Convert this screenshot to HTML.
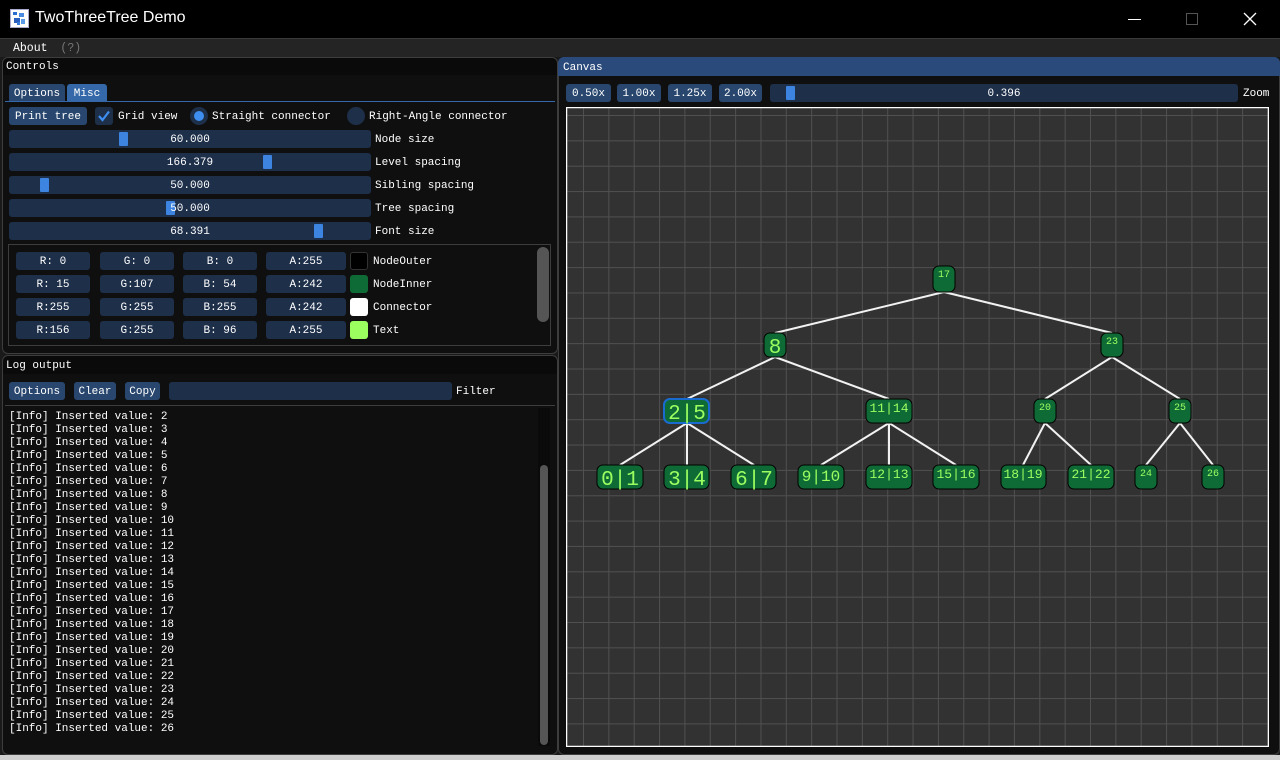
<!DOCTYPE html>
<html><head><meta charset="utf-8">
<style>
*{margin:0;padding:0;box-sizing:border-box}
body{width:1280px;height:760px;background:#1a1a1a;position:relative;overflow:hidden;font-family:"Liberation Mono","DejaVu Sans Mono",monospace;font-size:11px;color:#fff}
.a{position:absolute}
.btn{position:absolute;background:#29476e;border-radius:3px;height:18px;line-height:20px;text-align:center;color:#fff;white-space:nowrap}
.fr{position:absolute;background:#1e2f4a;border-radius:3px;height:18px;line-height:20px;text-align:center;white-space:nowrap}
.grab{position:absolute;top:2px;width:9px;height:14px;background:#3d84e0;border-radius:1px}
.lbl{position:absolute;line-height:20px;white-space:nowrap}
.win{position:absolute;background:#0f0f0f;border:1px solid #3d3d3d;border-radius:6px}
.log div{height:13px;line-height:13px;white-space:pre}
</style></head><body>
<div class="a" style="left:0;top:0;width:1280px;height:38px;background:#000"></div>
<div class="a" style="left:10px;top:9px;width:19px;height:19px;background:#fff;border:1px solid #aac"><svg width="17" height="17"><rect x="2" y="2" width="4" height="3" fill="#2a6fd0"/><rect x="8" y="3" width="5" height="4" fill="#4a8ae0"/><rect x="3" y="8" width="6" height="5" fill="#2a5fc0"/><rect x="10" y="9" width="4" height="5" fill="#5a9ae8"/><rect x="6" y="12" width="3" height="3" fill="#3a7ad8"/></svg></div>
<div class="a" style="left:35px;top:9px;font-family:'Liberation Sans',sans-serif;font-size:16px;color:#fff">TwoThreeTree Demo</div>
<div class="a" style="left:1128px;top:19px;width:13px;height:1px;background:#fff"></div>
<div class="a" style="left:1186px;top:13px;width:12px;height:12px;border:1px solid #555"></div>
<svg class="a" style="left:1243px;top:12px" width="14" height="14"><path d="M1 1L13 13M13 1L1 13" stroke="#fff" stroke-width="1.3"/></svg>
<div class="a" style="left:0;top:38px;width:1280px;height:19px;background:#242424;border-top:1px solid #3a3a3a"></div>
<div class="a" style="left:13px;top:41px;line-height:16px;font-size:11.5px">About <span style="color:#777;margin-left:6px">(?)</span></div>
<div class="a" style="left:0;top:755px;width:1280px;height:5px;background:#cfcfcf"></div>

<div class="win" style="left:2px;top:57px;width:556px;height:297px"></div>
<div class="a" style="left:3px;top:58px;width:554px;height:17px;background:#0a0a0a;border-radius:6px 6px 0 0"></div>
<div class="lbl" style="left:6px;top:57px">Controls</div>
<div class="btn" style="left:9px;top:84px;width:56px;height:17px;border-radius:3px 3px 0 0">Options</div>
<div class="btn" style="left:67px;top:84px;width:40px;height:17px;border-radius:3px 3px 0 0;background:#3468a8">Misc</div>
<div class="a" style="left:5px;top:101px;width:550px;height:1px;background:#3468a8"></div>
<div class="btn" style="left:9px;top:107px;width:78px">Print tree</div>
<div class="fr" style="left:95px;top:107px;width:18px"><svg width="18" height="18" style="position:absolute;left:0;top:0"><path d="M4 9L7.5 13L14 4.5" stroke="#3d8ef0" stroke-width="2.2" fill="none"/></svg></div>
<div class="lbl" style="left:118px;top:107px">Grid view</div>
<div class="a" style="left:190px;top:107px;width:18px;height:18px;border-radius:50%;background:#1e2f4a"><div class="a" style="left:4px;top:4px;width:10px;height:10px;border-radius:50%;background:#3d8ef0"></div></div>
<div class="lbl" style="left:212px;top:107px">Straight connector</div>
<div class="a" style="left:347px;top:107px;width:18px;height:18px;border-radius:50%;background:#1e2f4a"></div>
<div class="lbl" style="left:369px;top:107px">Right-Angle connector</div>

<div class="fr" style="left:9px;top:130px;width:362px">60.000<div class="grab" style="left:110px"></div></div><div class="lbl" style="left:375px;top:130px">Node size</div>
<div class="fr" style="left:9px;top:153px;width:362px">166.379<div class="grab" style="left:254px"></div></div><div class="lbl" style="left:375px;top:153px">Level spacing</div>
<div class="fr" style="left:9px;top:176px;width:362px">50.000<div class="grab" style="left:31px"></div></div><div class="lbl" style="left:375px;top:176px">Sibling spacing</div>
<div class="fr" style="left:9px;top:199px;width:362px"><div class="grab" style="left:157px"></div><span style="position:relative">50.000</span></div><div class="lbl" style="left:375px;top:199px">Tree spacing</div>
<div class="fr" style="left:9px;top:222px;width:362px">68.391<div class="grab" style="left:305px"></div></div><div class="lbl" style="left:375px;top:222px">Font size</div>

<div class="a" style="left:8px;top:244px;width:543px;height:102px;border:1px solid #3d3d3d"></div>
<div class="a" style="left:537px;top:247px;width:12px;height:75px;background:#555;border-radius:6px"></div>
<div class="fr" style="left:16px;top:252px;width:74px">R:  0</div><div class="fr" style="left:100px;top:252px;width:74px">G:  0</div><div class="fr" style="left:183px;top:252px;width:74px">B:  0</div><div class="fr" style="left:266px;top:252px;width:80px">A:255</div>
<div class="a" style="left:350px;top:252px;width:18px;height:18px;background:#000;border:1px solid #333;border-radius:3px"></div><div class="lbl" style="left:373px;top:252px">NodeOuter</div>
<div class="fr" style="left:16px;top:275px;width:74px">R: 15</div><div class="fr" style="left:100px;top:275px;width:74px">G:107</div><div class="fr" style="left:183px;top:275px;width:74px">B: 54</div><div class="fr" style="left:266px;top:275px;width:80px">A:242</div>
<div class="a" style="left:350px;top:275px;width:18px;height:18px;background:#0f6b36;border-radius:3px"></div><div class="lbl" style="left:373px;top:275px">NodeInner</div>
<div class="fr" style="left:16px;top:298px;width:74px">R:255</div><div class="fr" style="left:100px;top:298px;width:74px">G:255</div><div class="fr" style="left:183px;top:298px;width:74px">B:255</div><div class="fr" style="left:266px;top:298px;width:80px">A:242</div>
<div class="a" style="left:350px;top:298px;width:18px;height:18px;background:#fff;border-radius:3px"></div><div class="lbl" style="left:373px;top:298px">Connector</div>
<div class="fr" style="left:16px;top:321px;width:74px">R:156</div><div class="fr" style="left:100px;top:321px;width:74px">G:255</div><div class="fr" style="left:183px;top:321px;width:74px">B: 96</div><div class="fr" style="left:266px;top:321px;width:80px">A:255</div>
<div class="a" style="left:350px;top:321px;width:18px;height:18px;background:#9cff60;border-radius:3px"></div><div class="lbl" style="left:373px;top:321px">Text</div>

<div class="win" style="left:2px;top:355px;width:556px;height:400px"></div>
<div class="a" style="left:3px;top:356px;width:554px;height:18px;background:#0a0a0a;border-radius:6px 6px 0 0"></div>
<div class="lbl" style="left:6px;top:356px">Log output</div>
<div class="btn" style="left:9px;top:382px;width:56px">Options</div>
<div class="btn" style="left:74px;top:382px;width:42px">Clear</div>
<div class="btn" style="left:125px;top:382px;width:35px">Copy</div>
<div class="fr" style="left:169px;top:382px;width:283px"></div>
<div class="lbl" style="left:456px;top:382px">Filter</div>
<div class="a" style="left:5px;top:405px;width:550px;height:1px;background:#3d3d3d"></div>
<div class="a" style="left:538px;top:408px;width:12px;height:338px;background:#0a0a0a"></div>
<div class="a" style="left:540px;top:465px;width:8px;height:280px;background:#555;border-radius:4px"></div>
<div class="a log" style="left:9px;top:411px">
<div>[Info] Inserted value: 2</div><div>[Info] Inserted value: 3</div><div>[Info] Inserted value: 4</div><div>[Info] Inserted value: 5</div><div>[Info] Inserted value: 6</div><div>[Info] Inserted value: 7</div><div>[Info] Inserted value: 8</div><div>[Info] Inserted value: 9</div><div>[Info] Inserted value: 10</div><div>[Info] Inserted value: 11</div><div>[Info] Inserted value: 12</div><div>[Info] Inserted value: 13</div><div>[Info] Inserted value: 14</div><div>[Info] Inserted value: 15</div><div>[Info] Inserted value: 16</div><div>[Info] Inserted value: 17</div><div>[Info] Inserted value: 18</div><div>[Info] Inserted value: 19</div><div>[Info] Inserted value: 20</div><div>[Info] Inserted value: 21</div><div>[Info] Inserted value: 22</div><div>[Info] Inserted value: 23</div><div>[Info] Inserted value: 24</div><div>[Info] Inserted value: 25</div><div>[Info] Inserted value: 26</div>
</div>

<div class="win" style="left:558px;top:57px;width:722px;height:698px"></div>
<div class="a" style="left:558px;top:57px;width:722px;height:19px;background:#294a7a;border-radius:6px 6px 0 0"></div>
<div class="lbl" style="left:563px;top:58px">Canvas</div>
<div class="btn" style="left:566px;top:84px;width:45px">0.50x</div>
<div class="btn" style="left:617px;top:84px;width:44px">1.00x</div>
<div class="btn" style="left:668px;top:84px;width:44px">1.25x</div>
<div class="btn" style="left:719px;top:84px;width:43px">2.00x</div>
<div class="fr" style="left:770px;top:84px;width:468px">0.396<div class="grab" style="left:16px"></div></div>
<div class="lbl" style="left:1243px;top:84px">Zoom</div>
<svg class="a" style="left:566px;top:107px" width="703" height="640">
<defs><pattern id="g" x="17" y="8" width="25.35" height="25.35" patternUnits="userSpaceOnUse"><rect width="25.35" height="25.35" fill="#323232"/><path d="M0 0.5H25.35M0.5 0V25.35" stroke="#505050" stroke-width="1"/></pattern></defs>
<rect x="0.5" y="0.5" width="702" height="639" fill="url(#g)" stroke="#fff" stroke-width="1.5"/>
<g transform="translate(-566,-107)" stroke="#f2f2f2" stroke-width="2">
<path d="M944 292L775 333M944 292L1112 333M775 357L687 399M775 357L889 399M1112 357L1045 399M1112 357L1180 399M687 423L620 465M687 423L687 465M687 423L754 465M889 423L821 465M889 423L889 465M889 423L956 465M1045 423L1023 465M1045 423L1091 465M1180 423L1146 465M1180 423L1213 465"/>
</g>
<g transform="translate(-566,-107)" fill="#0f6b36" stroke="#000" stroke-width="1">
<rect x="933" y="266" width="22" height="26" rx="6"/>
<rect x="764" y="333" width="22" height="24" rx="6"/>
<rect x="1101" y="333" width="22" height="24" rx="6"/>
<rect x="664" y="399" width="45" height="24" rx="6" stroke="#1a6bd0" stroke-width="2"/>
<rect x="866" y="399" width="46" height="24" rx="6"/>
<rect x="1034" y="399" width="22" height="24" rx="6"/>
<rect x="1169" y="399" width="22" height="24" rx="6"/>
<rect x="597" y="465" width="46" height="24" rx="6"/>
<rect x="664" y="465" width="45" height="24" rx="6"/>
<rect x="731" y="465" width="45" height="24" rx="6"/>
<rect x="798" y="465" width="46" height="24" rx="6"/>
<rect x="866" y="465" width="46" height="24" rx="6"/>
<rect x="933" y="465" width="46" height="24" rx="6"/>
<rect x="1001" y="465" width="45" height="24" rx="6"/>
<rect x="1068" y="465" width="46" height="24" rx="6"/>
<rect x="1135" y="465" width="22" height="24" rx="6"/>
<rect x="1202" y="465" width="22" height="24" rx="6"/>
</g>
<g transform="translate(-566,-107)" fill="#9cff60" font-family="Liberation Mono,monospace" text-anchor="middle">
<text x="944" y="277" font-size="10">17</text>
<text x="775" y="353" font-size="21">8</text>
<text x="1112" y="344" font-size="10">23</text>
<text x="687" y="419" font-size="21">2|5</text>
<text x="889" y="412" font-size="13">11|14</text>
<text x="1045" y="410" font-size="10">20</text>
<text x="1180" y="410" font-size="10">25</text>
<text x="620" y="485" font-size="21">0|1</text>
<text x="687" y="485" font-size="21">3|4</text>
<text x="754" y="485" font-size="21">6|7</text>
<text x="821" y="481" font-size="16">9|10</text>
<text x="889" y="478" font-size="13">12|13</text>
<text x="956" y="478" font-size="13">15|16</text>
<text x="1023" y="478" font-size="13">18|19</text>
<text x="1091" y="478" font-size="13">21|22</text>
<text x="1146" y="476" font-size="10">24</text>
<text x="1213" y="476" font-size="10">26</text>
</g>
</svg>
</body></html>
